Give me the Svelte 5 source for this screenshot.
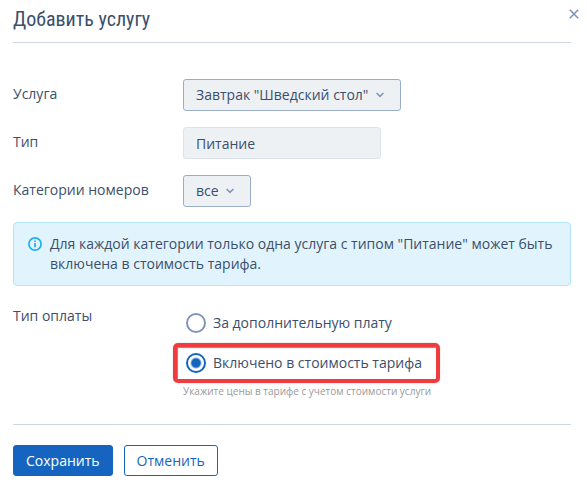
<script lang="ts">
  interface Props {
    onclose?: () => void;
    onsave?: (payment: string) => void;
  }
  let { onclose, onsave }: Props = $props();

  let service = $state('breakfast');
  let rooms = $state('all');
  let payment = $state('included');

  function submit(e: SubmitEvent) {
    e.preventDefault();
    onsave?.(payment);
  }
</script>

{#snippet chevron()}
  <svg class="chevron" viewBox="0 0 8 6" aria-hidden="true">
    <path d="M0.6 1 L4 4.4 L7.4 1" fill="none" stroke="#8096b8" stroke-width="1.6" />
  </svg>
{/snippet}

<form class="dialog" onsubmit={submit}>
  <header>
    <h1>Добавить услугу</h1>
    <button class="close" type="button" aria-label="Закрыть" onclick={() => onclose?.()}>
      <svg viewBox="0 0 10 10" aria-hidden="true">
        <path d="M0.8 0.8 L9.2 9.2 M9.2 0.8 L0.8 9.2" stroke="#7f95b6" stroke-width="1.6" />
      </svg>
    </button>
  </header>

  <div class="fields">
    <div class="row">
      <label class="name" for="service">Услуга</label>
      <div class="select">
        <select id="service" bind:value={service}>
          <option value="breakfast">Завтрак "Шведский стол"</option>
        </select>
        {@render chevron()}
      </div>
    </div>
    <div class="row">
      <label class="name" for="type">Тип</label>
      <input id="type" class="text" type="text" value="Питание" readonly />
    </div>
    <div class="row">
      <label class="name" for="rooms">Категории номеров</label>
      <div class="select">
        <select id="rooms" bind:value={rooms}>
          <option value="all">все</option>
        </select>
        {@render chevron()}
      </div>
    </div>
  </div>

  <div class="note">
    <svg viewBox="0 0 14 14" aria-hidden="true">
      <circle cx="7" cy="7" r="6.1" fill="none" stroke="#1eaff3" stroke-width="1.7" />
      <path d="M7 6 V10.3 M7 3.6 V5" stroke="#1eaff3" stroke-width="1.7" />
    </svg>
    <p>
      Для каждой категории только одна услуга с типом "Питание" может быть
      включена в стоимость тарифа.
    </p>
  </div>

  <div class="payment" role="radiogroup" aria-labelledby="payment-label">
    <span class="name" id="payment-label">Тип оплаты</span>
    <div class="options">
      <label class="option">
        <input type="radio" name="payment" value="extra" bind:group={payment} />
        За дополнительную плату
      </label>
      <label class="option marked">
        <input type="radio" name="payment" value="included" bind:group={payment} />
        Включено в стоимость тарифа
      </label>
      <p class="hint">Укажите цены в тарифе с учетом стоимости услуги</p>
    </div>
  </div>

  <footer>
    <button class="btn primary" type="submit">Сохранить</button>
    <button class="btn" type="button" onclick={() => onclose?.()}>Отменить</button>
  </footer>
</form>

<style>
  :global(body) {
    margin: 0;
    background: #fff;
  }
  .dialog {
    padding: 0 16px 14px 13px;
    font-family: 'Open Sans', 'Noto Sans', sans-serif;
    font-size: 14px;
    line-height: 20px;
    color: #3b4f6b;
  }
  header {
    position: relative;
    padding: 7px 0 10px;
    border-bottom: 1px solid #cdd6e2;
  }
  h1 {
    margin: 0;
    font-family: 'Roboto Condensed', Roboto, sans-serif;
    font-size: 20px;
    font-weight: 400;
    line-height: 25px;
  }
  .close {
    position: absolute;
    top: 5px;
    right: -12px;
    display: flex;
    padding: 4px;
    border: 0;
    background: none;
    cursor: pointer;
  }
  .close svg {
    width: 10px;
    height: 10px;
  }
  .fields {
    display: flex;
    flex-direction: column;
    gap: 16px;
    padding: 36px 0 15px;
  }
  .row {
    display: flex;
    align-items: flex-start;
  }
  .name {
    flex: 0 0 170px;
    padding-top: 5px;
  }
  .select {
    position: relative;
  }
  select,
  .text {
    display: block;
    box-sizing: border-box;
    height: 32px;
    margin: 0;
    border: 1px solid #9aaeca;
    border-radius: 3px;
    background: #eef1f4;
    font: inherit;
    color: inherit;
  }
  select {
    appearance: none;
    padding: 0 31px 0 12px;
  }
  .text {
    width: 198px;
    padding: 0 12px;
    border-color: #dde3eb;
  }
  .chevron {
    position: absolute;
    top: 13px;
    right: 17px;
    width: 8px;
    height: 6px;
    pointer-events: none;
  }
  .note {
    display: flex;
    gap: 8px;
    padding: 11px 14px;
    border: 1px solid #b3e5fa;
    border-radius: 4px;
    background: #e1f4fe;
  }
  .note svg {
    flex: none;
    width: 14px;
    height: 14px;
    margin-top: 3px;
  }
  .note p {
    margin: 0;
  }
  .payment {
    display: flex;
    padding: 15px 0 25px;
  }
  .options {
    display: flex;
    flex-direction: column;
    align-items: flex-start;
    padding-top: 2px;
  }
  .option {
    display: flex;
    align-items: center;
    gap: 7px;
    box-sizing: border-box;
    height: 40px;
    margin-left: -10px;
    padding: 0 18px 0 13px;
  }
  .option input {
    appearance: none;
    box-sizing: border-box;
    width: 20px;
    height: 20px;
    margin: 0;
    border: 2px solid #8096b8;
    border-radius: 50%;
  }
  .option input:checked {
    border-color: #1565c0;
    background: radial-gradient(circle, #1565c0 4px, #fff 6px);
  }
  .marked {
    padding: 0 14px 0 9px;
    border: 4px solid #f03c3f;
    border-radius: 5px;
    box-shadow:
      0 0 1px 0 #777,
      inset 1px 1px 1px 0 #888;
  }
  .hint {
    margin: 0;
    font-size: 10px;
    line-height: 16px;
    color: #999;
  }
  footer {
    display: flex;
    gap: 11px;
    padding-top: 20px;
    border-top: 1px solid #cdd6e2;
  }
  .btn {
    height: 31px;
    padding: 0 12px;
    border: 1px solid #1565c0;
    border-radius: 3px;
    background: #fff;
    font: inherit;
    color: #1565c0;
    cursor: pointer;
  }
  .primary {
    background: #1565c0;
    color: #fff;
  }
</style>
